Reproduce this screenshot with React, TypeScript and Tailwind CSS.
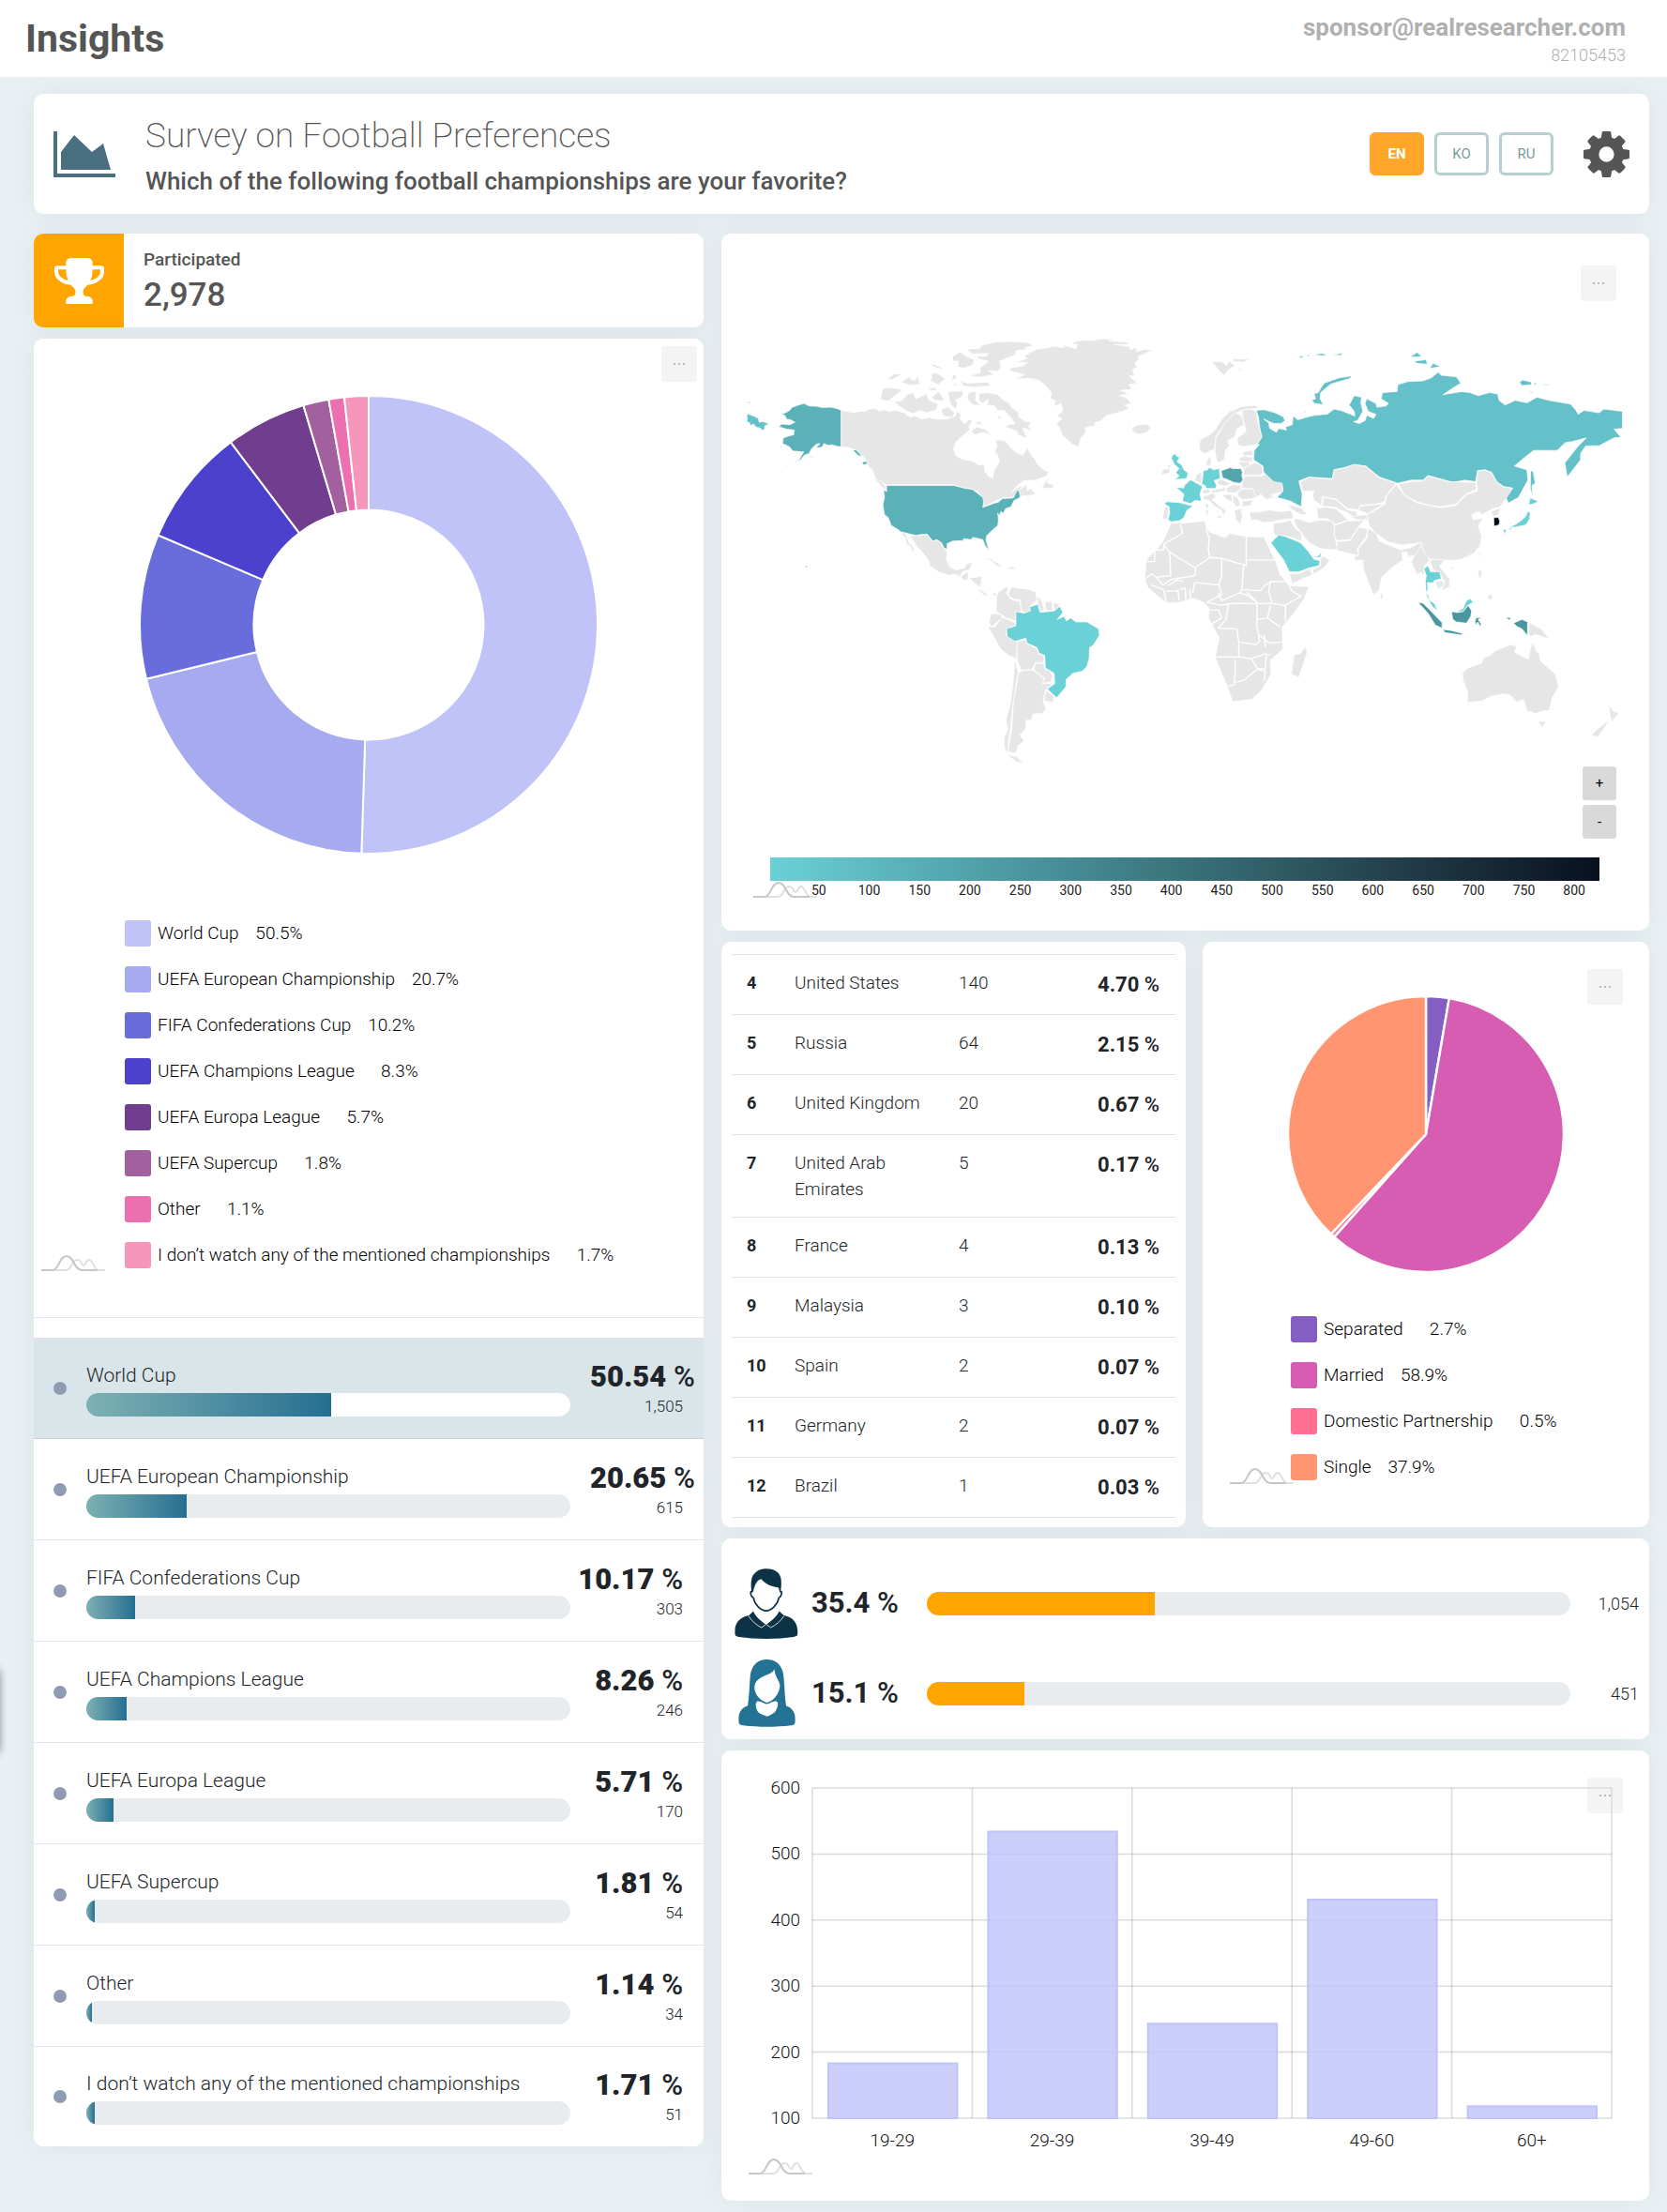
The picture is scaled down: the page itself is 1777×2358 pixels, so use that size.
import React from "react";

const CARD = "rounded-[10px] bg-white shadow-[0_0_30px_rgba(0,0,0,0.05)]";

type Slice = { label: string; pct: number; color: string };

const CHAMPIONSHIPS: Slice[] = [
  { label: "World Cup", pct: 50.5, color: "#bfc3f8" },
  { label: "UEFA European Championship", pct: 20.7, color: "#a6aaee" },
  { label: "FIFA Confederations Cup", pct: 10.2, color: "#696ddc" },
  { label: "UEFA Champions League", pct: 8.3, color: "#4c41cd" },
  { label: "UEFA Europa League", pct: 5.7, color: "#713d8e" },
  { label: "UEFA Supercup", pct: 1.8, color: "#a2609f" },
  { label: "Other", pct: 1.1, color: "#ec6faf" },
  { label: "I don’t watch any of the mentioned championships", pct: 1.7, color: "#f596ba" },
];

const RESULTS = [
  { pct: "50.54", count: "1,505" },
  { pct: "20.65", count: "615" },
  { pct: "10.17", count: "303" },
  { pct: "8.26", count: "246" },
  { pct: "5.71", count: "170" },
  { pct: "1.81", count: "54" },
  { pct: "1.14", count: "34" },
  { pct: "1.71", count: "51" },
];

const MARITAL: Slice[] = [
  { label: "Separated", pct: 2.7, color: "#845ec2" },
  { label: "Married", pct: 58.9, color: "#d65db1" },
  { label: "Domestic Partnership", pct: 0.5, color: "#ff6f91" },
  { label: "Single", pct: 37.9, color: "#ff9671" },
];

const COUNTRIES = [
  ["4", "United States", "140", "4.70"],
  ["5", "Russia", "64", "2.15"],
  ["6", "United Kingdom", "20", "0.67"],
  ["7", "United Arab Emirates", "5", "0.17"],
  ["8", "France", "4", "0.13"],
  ["9", "Malaysia", "3", "0.10"],
  ["10", "Spain", "2", "0.07"],
  ["11", "Germany", "2", "0.07"],
  ["12", "Brazil", "1", "0.03"],
];

const AGES = [
  { label: "19-29", value: 183 },
  { label: "29-39", value: 534 },
  { label: "39-49", value: 243 },
  { label: "49-60", value: 431 },
  { label: "60+", value: 118 },
];

const GREY = "#e6e6e6";
const TEAL = "#6ad1d6";
const RUS = "#64c1c9";
const USA = "#5bb1b8";
const IDN = "#4b979f";

type Land = [string, string];

const WEST: Land[] = [
  [USA, "188,333 202,330 215,322 222,313 240,306 262,300 276,308 300,309 320,313 345,312 366,316 380,322 380,438 366,437 350,432 338,434 325,428 318,440 300,442 312,428 300,430 285,445 277,460 262,465 250,480 218,494 245,480 260,455 225,452 214,438 192,428 195,410 212,404 228,400 230,385 205,382 180,374 190,366 215,368 232,360 218,352 205,350 200,338"],
  [USA, "277,472 290,468 286,472"],
  [USA, "418,450 426,447 440,460 445,470 434,466"],
  [USA, "446,488 462,484 466,492 450,496"],
  [USA, "183,438 190,436 187,441"],
  [USA, "204,498 214,494 208,499"],
  [RUS, "79,332 100,340 115,348 118,360 130,358 150,366 135,372 136,380 128,386 120,378 110,377 100,366 90,370 86,360 79,362"],
  [RUS, "79,294 92,296 85,300"],
  [USA, "266,818 271,818 271,823 266,823"],
  [GREY, "380,322 400,326 420,330 435,326 455,325 470,318 490,316 500,324 520,320 532,325 555,322 580,330 600,345 615,340 640,350 660,345 680,350 720,350 745,340 750,325 762,335 760,350 775,366 785,352 800,355 788,372 790,385 775,398 765,405 745,425 738,445 745,465 765,478 800,485 818,496 836,495 838,515 850,532 864,540 868,515 885,485 880,465 870,455 878,435 872,415 905,420 920,440 940,458 960,465 975,442 985,462 1000,480 1005,492 1025,510 1042,520 1035,532 1000,545 965,546 945,560 922,585 948,566 958,562 950,580 930,600 895,602 865,615 835,630 832,605 820,585 800,573 760,568 740,560 525,560 510,552 490,542 480,512 470,505 455,475 430,450 400,440 380,438"],
  [GREY, "950,575 972,560 975,580 985,572 1000,590 975,596 962,594 950,600"],
  [GREY, "970,605 985,598 980,606"],
  [GREY, "1020,570 1038,540 1040,556 1060,560 1055,572"],
  [GREY, "486,540 505,548 522,565 526,578 510,568"],
  [GREY, "505,285 513,252 540,250 575,256 555,272 530,292 515,290"],
  [GREY, "550,295 575,290 590,272 610,265 618,285 635,278 650,268 662,290 690,302 682,322 650,330 632,322 610,332 585,322 565,308"],
  [GREY, "527,222 548,206 575,205 560,215 540,224"],
  [GREY, "572,232 595,216 612,228 625,214 632,238 600,242"],
  [GREY, "665,228 672,202 690,205 712,222 690,240"],
  [GREY, "610,184 622,183 616,187"],
  [GREY, "735,150 760,136 780,150 805,160 800,178 770,187 752,182 755,165 738,165"],
  [GREY, "660,172 680,176 700,185 702,192 680,185"],
  [GREY, "732,222 740,205 748,215 742,224"],
  [GREY, "760,228 785,235 850,232 855,244 800,248 770,244"],
  [GREY, "735,242 745,234 750,243"],
  [GREY, "660,252 680,248 685,258 665,260"],
  [GREY, "668,280 690,262 708,285 705,292 680,290"],
  [GREY, "720,262 770,260 765,280 745,288 752,300 745,320 728,300"],
  [GREY, "700,320 720,310 742,330 735,345 705,340"],
  [GREY, "782,285 788,265 812,262 808,290 825,305 800,305"],
  [GREY, "820,268 845,265 880,272 900,290 918,300 922,312 945,328 948,345 970,358 990,360 978,372 990,392 975,382 960,378 968,400 975,412 945,400 940,388 905,375 915,368 935,365 922,345 900,322 880,322 870,308 845,305 850,285 832,300 820,290"],
  [GREY, "795,390 812,375 840,382 862,405 838,392 822,395 808,400"],
  [GREY, "878,344 886,340 892,346 884,350"],
  [GREY, "810,360 825,358 828,366 815,368"],
  [GREY, "780,126 820,126 830,114 870,105 930,102 975,106 995,115 965,122 975,128 940,130 935,145 910,155 885,165 890,185 880,198 850,195 868,208 830,215 785,212 825,202 822,188 850,165 818,158 812,148 842,150 850,140 800,142"],
  [GREY, "915,188 960,180 975,170 940,168 975,155 962,150 1000,128 1060,118 1092,122 1085,114 1130,125 1135,112 1115,108 1135,100 1180,98 1210,94 1255,95 1235,100 1290,104 1303,112 1250,112 1298,118 1305,128 1320,122 1325,135 1345,128 1382,130 1355,138 1330,150 1330,162 1318,170 1325,185 1310,192 1318,212 1300,212 1325,235 1300,240 1308,255 1270,258 1298,268 1268,275 1290,282 1306,300 1285,305 1300,315 1280,325 1228,338 1210,355 1190,362 1190,372 1160,376 1160,395 1145,410 1138,440 1118,430 1098,412 1085,400 1078,380 1068,362 1085,350 1070,340 1088,322 1082,300 1058,310 1065,292 1048,285 1052,268 1035,245 1010,225 985,220 935,220 965,208 925,198"],
  [GREY, "1308,382 1318,374 1335,372 1352,366 1368,378 1355,392 1332,398 1312,392"],
  [GREY, "1298,368 1308,370 1302,374"],
  [USA, "525,562 740,562 770,570 800,575 832,600 835,615 832,632 850,626 865,620 882,615 895,604 930,602 940,580 948,578 952,600 932,610 922,630 905,636 897,652 890,645 885,660 880,650 882,672 880,690 862,705 845,722 842,735 852,770 840,755 832,735 820,732 800,728 795,735 770,732 770,738 735,740 718,748 718,765 708,762 700,745 685,735 672,740 655,718 638,718 620,722 570,710 560,702 540,690 530,665 518,655 513,625 518,600 515,575 525,582"],
  [GREY, "600,722 620,722 655,720 672,740 685,737 700,745 710,766 718,770 716,800 730,825 745,832 775,826 780,812 800,808 788,832 768,836 760,852 740,845 725,850 690,838 662,818 660,802 635,770 620,755"],
  [GREY, "570,712 585,714 595,740 610,760 612,775 625,790 605,770 600,755 588,748 585,730"],
  [GREY, "762,852 785,838 786,852 782,866 768,862"],
  [GREY, "788,858 828,852 826,888 810,878 800,868"],
  [GREY, "812,888 832,900 852,912 872,904 880,916 862,910 840,914 828,906"],
  [GREY, "840,796 858,796 880,810 895,824 875,818 862,804"],
  [GREY, "912,828 924,820 940,828 925,830"],
  [GREY, "876,918 884,900 910,886 915,890 908,905 918,922 935,930 950,932 955,965 938,968 938,995 905,985 888,972 875,966"],
  [GREY, "914,905 925,886 945,890 980,894 1000,902 1005,928 985,945 985,962 968,970 955,960 952,928 935,925 918,918"],
  [GREY, "1005,912 1020,930 1028,955 1018,967 1008,942"],
  [GREY, "1030,935 1052,932 1056,962 1035,960"],
  [GREY, "1058,935 1078,942 1068,958 1058,955"],
  [GREY, "858,972 888,974 895,985 870,1005 862,1014 852,1000"],
  [GREY, "848,1012 868,1016 895,984 936,1000 936,1008 910,1020 906,1040 932,1058 942,1062 940,1115 915,1105 890,1085 870,1050"],
  [TEAL, "938,965 965,970 985,962 982,950 1008,942 1015,967 1060,963 1078,948 1088,968 1070,990 1092,980 1100,995 1112,985 1130,998 1165,998 1202,1020 1205,1040 1185,1072 1173,1080 1172,1115 1165,1140 1150,1155 1120,1162 1098,1182 1098,1205 1068,1240 1038,1212 1062,1195 1060,1162 1032,1145 1030,1105 1012,1098 1005,1080 972,1065 970,1050 935,1060 910,1045 908,1020 938,1010"],
  [GREY, "942,1062 968,1054 975,1068 1005,1084 1012,1100 1028,1108 1026,1128 998,1130 990,1150 955,1152 942,1120"],
  [GREY, "1000,1132 1026,1130 1032,1150 1045,1152 1056,1175 1046,1192 1022,1192 1030,1178 995,1150"],
  [GREY, "1034,1216 1062,1238 1056,1256 1028,1250"],
  [GREY, "945,1160 965,1152 992,1152 1028,1178 1022,1195 1055,1195 1032,1215 1025,1250 1035,1278 1020,1290 992,1292 988,1312 970,1312 970,1338 950,1360 965,1378 945,1392 938,1418 912,1412 925,1340 930,1250 942,1190"],
  [GREY, "935,1116 945,1160 938,1200 930,1250 920,1340 912,1400 918,1418 902,1405 900,1370 912,1340 906,1310 920,1260 928,1200"],
  [GREY, "908,1422 940,1428 962,1450 942,1446 930,1438"],
];

const EAST: Land[] = [
  [GREY, "255,165 290,168 298,180 308,165 325,180 305,192 292,210 278,196"],
  [GREY, "315,158 368,158 350,168 322,166"],
  [GREY, "328,184 348,196 342,198"],
  [GREY, "16,380 30,370 60,366 74,378 62,392 38,398 22,392"],
  [GREY, "218,430 222,415 250,400 265,385 285,350 310,325 345,310 385,306 395,315 350,320 320,335 292,370 268,405 264,445 235,460 220,450"],
  [GREY, "267,412 292,368 325,328 348,342 350,368 330,382 325,405 302,420 308,435 296,450 293,480 272,490 265,455"],
  [GREY, "345,322 372,318 388,325 390,350 398,380 405,408 388,432 345,438 332,430 332,410 358,390 350,355"],
  [GREY, "238,494 242,478 252,470 254,490 246,502"],
  [GREY, "345,455 378,450 378,465 352,468"],
  [GREY, "332,478 352,468 376,472 378,486 345,486"],
  [GREY, "332,488 362,486 370,496 350,506"],
  [GREY, "350,508 385,488 405,500 408,520 400,530 350,530"],
  [GREY, "345,552 355,532 405,532 415,525 440,545 465,556 466,582 430,592 442,602 415,606 402,590 385,600 378,572 345,572"],
  ["#54a5ac", "283,515 310,505 318,508 342,508 347,520 345,528 348,545 340,555 320,552 300,542 288,538"],
  [TEAL, "228,540 230,515 243,512 248,504 260,512 278,508 280,540 262,546 270,562 266,572 240,572 235,562 225,558"],
  [GREY, "204,546 210,528 224,518 226,540 222,556"],
  [TEAL, "148,568 172,570 175,560 192,544 228,565 220,590 225,612 205,610 192,620 168,612 172,590 160,578"],
  [TEAL, "240,622 244,622 243,634 239,632"],
  [TEAL, "113,620 122,614 160,617 200,628 182,640 172,665 160,674 135,678 125,672 130,650 128,630"],
  [GREY, "116,632 127,630 123,670 108,668"],
  [TEAL, "135,475 138,465 148,460 150,468 160,472 152,486 165,495 172,512 185,522 180,540 145,543 158,532 148,520 158,508 144,495"],
  [TEAL, "122,500 132,497 130,504"],
  [GREY, "105,528 108,512 130,508 130,522"],
  [GREY, "226,576 248,574 250,586 230,590"],
  [GREY, "252,578 272,574 296,568 296,580 260,586"],
  [GREY, "270,550 284,542 312,556 296,564 278,560"],
  [GREY, "300,570 318,560 344,562 342,574 326,586 300,584"],
  [GREY, "332,586 345,574 378,574 388,600 365,606 345,606 332,596"],
  [GREY, "345,612 378,608 370,626 348,630"],
  [GREY, "318,592 332,600 342,625 328,630 318,612"],
  [GREY, "286,592 314,590 318,615 300,608"],
  [GREY, "322,642 348,634 342,645 348,660 340,684 328,672"],
  [GREY, "228,598 262,586 268,600 256,606 275,625 298,642 290,658 284,640 262,628 248,610 232,608"],
  [GREY, "266,660 286,658 282,668"],
  [GREY, "238,640 246,640 244,656 238,656"],
  [GREY, "368,648 400,646 425,640 460,646 492,642 500,668 470,670 440,678 410,680 390,672 372,674"],
  [GREY, "480,622 522,634 540,655 518,654 496,640"],
  [RUS, "388,322 410,320 440,328 468,342 474,355 462,364 440,364 410,350 425,362 428,380 448,392 455,380 478,385 475,375 495,368 498,340 512,352 535,345 560,338 600,334 620,318 640,322 682,340 680,325 665,305 680,275 702,280 700,300 706,325 690,355 678,358 695,364 712,355 718,338 738,348 745,335 722,325 712,300 718,285 745,300 748,312 775,308 782,300 760,285 765,265 808,262 810,240 840,230 885,228 910,218 930,200 940,210 985,215 998,235 975,250 945,272 1000,262 1025,265 1050,275 1085,265 1108,270 1112,290 1130,305 1160,290 1195,298 1225,280 1260,290 1325,302 1340,320 1348,335 1365,322 1410,330 1425,318 1480,325 1480,380 1455,382 1475,408 1455,410 1410,435 1370,436 1355,460 1355,480 1330,515 1315,535 1308,490 1345,440 1372,410 1330,422 1310,425 1285,450 1215,450 1185,475 1158,500 1195,512 1198,545 1170,600 1140,618 1132,600 1152,570 1125,565 1105,550 1090,520 1070,512 1048,515 1042,550 1010,545 975,552 900,530 885,545 850,545 810,555 755,535 715,500 680,495 650,505 620,512 615,540 545,535 515,548 525,590 522,630 490,612 450,600 468,580 465,555 440,550 410,520 408,500 380,480 382,450 398,430 388,435 405,408 398,375 395,345"],
  [RUS, "553,290 565,285 560,268 572,266 590,235 635,218 672,212 668,220 610,238 580,265 578,285 588,304 562,300"],
  [RUS, "845,152 868,137 882,150"],
  [RUS, "858,165 895,160 898,175 868,172"],
  [RUS, "905,188 915,172 938,182"],
  [RUS, "1173,232 1182,225 1210,232 1208,240 1180,243"],
  [RUS, "1215,234 1225,236 1220,242"],
  [RUS, "1240,236 1268,241 1250,241"],
  [RUS, "1198,262 1215,262 1208,266"],
  [RUS, "512,150 530,148 524,155"],
  [RUS, "535,148 548,144 545,150"],
  [RUS, "560,144 585,140 600,148 575,147"],
  [RUS, "612,146 648,138 640,146"],
  [RUS, "528,326 536,325 534,330"],
  [RUS, "1206,515 1214,518 1220,555 1210,562 1213,600 1205,570"],
  [GREY, "518,550 545,537 615,542 620,512 650,507 680,495 715,502 755,538 805,554 775,595 770,615 740,622 700,625 690,640 660,635 625,605 585,598 582,625 560,610 556,592 562,580 528,580"],
  [GREY, "585,628 588,600 625,608 660,640 685,645 690,655 680,662 660,650 625,632"],
  [GREY, "568,635 595,632 625,636 662,672 625,686 600,668 572,668"],
  [GREY, "692,640 700,628 772,620 740,640 720,652"],
  [GREY, "668,662 718,654 720,674 690,672"],
  [GREY, "812,558 850,550 885,548 900,532 960,550 1042,552 1045,575 1015,588 1000,602 985,622 935,630 900,624 870,615 830,592"],
  [GREY, "806,558 828,592 868,618 935,633 985,626 1002,604 1018,590 1048,580 1045,552 1048,515 1070,513 1090,522 1105,550 1125,567 1152,572 1132,605 1115,630 1090,638 1062,655 1050,645 1030,655 1035,672 1065,665 1050,690 1060,725 1055,755 1038,778 1000,797 975,802 940,800 910,798 895,790 885,770 880,745 820,752 780,742 745,715 725,690 718,655 745,640 772,622 776,596"],
  [GREY, "966,826 978,820 972,830"],
  [GREY, "1050,795 1054,776 1057,784"],
  [GREY, "1088,645 1118,632 1110,655 1095,662"],
  ["#050b1c", "1096,665 1110,664 1114,676 1112,688 1097,692"],
  [TEAL, "1205,602 1230,613 1212,622 1200,622"],
  [TEAL, "1197,645 1205,648 1203,668 1192,688 1165,694 1140,698 1165,684 1180,672 1192,660"],
  [TEAL, "1124,702 1134,702 1128,720"],
  [TEAL, "1140,700 1152,696 1146,704"],
  [GREY, "440,682 475,678 490,672 505,700 520,712 526,742 500,730 475,724 445,722 438,708"],
  [GREY, "500,668 520,670 545,680 575,672 610,675 622,690 620,720 632,768 590,765 575,762 545,745 520,710 505,690"],
  [GREY, "622,690 660,675 700,675 715,668 695,690 668,735 628,738 620,720"],
  [GREY, "628,742 668,738 695,695 720,700 716,725 688,765 694,785 668,780 630,770"],
  [GREY, "722,698 745,715 755,740 818,768 850,760 875,745 885,750 862,790 850,785 842,795 838,775 822,775 825,800 795,822 762,855 755,895 738,912 722,870 708,830 705,800 685,802 678,790 694,785 692,765 718,730"],
  [GREY, "758,902 768,918 758,926"],
  [GREY, "862,785 880,752 888,775 905,800 890,818 888,848 878,840 868,848 850,805"],
  [GREY, "905,800 935,798 950,800 935,820 965,862 965,885 940,900 950,870 935,845 915,830"],
  [GREY, "922,870 945,866 948,884 930,892"],
  [TEAL, "888,828 900,818 908,838 935,838 940,860 918,866 915,874 898,872 900,895 895,905 892,870 895,850"],
  [TEAL, "891,902 902,915 905,928 920,940 928,962 912,948"],
  [TEAL, "985,965 1005,955 1015,930 1025,924 1035,935 1018,945 1005,965"],
  [IDN, "870,935 885,938 915,970 942,1000 942,1018 922,1008 900,970"],
  [IDN, "945,1022 968,1025 1003,1035 1000,1040 950,1032"],
  [IDN, "970,965 988,968 1005,965 1020,945 1030,962 1028,980 1015,1002 985,998 974,990"],
  [IDN, "1043,985 1062,983 1050,990 1060,1008 1054,1010 1048,998 1044,1008 1040,998"],
  [IDN, "1132,982 1148,985 1142,992"],
  [IDN, "1155,1002 1180,990 1197,998 1197,1042 1180,1020 1165,1012"],
  [GREY, "1201,1000 1238,1020 1262,1052 1240,1045 1222,1038 1201,1045"],
  [GREY, "1048,845 1052,828 1062,840 1056,860"],
  [GREY, "1078,918 1090,906 1092,922 1082,928"],
  [TEAL, "432,745 455,720 475,725 520,745 545,775 560,798 578,802 575,818 545,826 515,838 487,838 470,800 445,765"],
  [TEAL, "556,790 574,786 582,773 580,792"],
  [GREY, "582,785 608,800 590,825 560,845 556,832 578,820"],
  [GREY, "487,845 520,842 545,828 556,846 495,876"],
  [GREY, "135,682 180,682 235,675 240,700 250,712 295,728 310,715 360,726 410,726 428,765 448,810 458,845 485,882 545,885 530,925 500,970 465,1015 468,1085 430,1120 432,1165 405,1215 375,1245 318,1253 300,1200 265,1110 278,1050 245,985 248,955 235,938 200,922 160,935 120,938 65,888 55,862 60,800 108,745"],
  [GREY, "535,1078 540,1095 515,1175 493,1165 500,1105 520,1098"],
  [GREY, "1003,1160 1020,1145 1060,1130 1068,1110 1085,1105 1100,1090 1130,1078 1145,1070 1165,1076 1158,1095 1200,1117 1205,1085 1212,1062 1222,1090 1232,1100 1235,1122 1280,1165 1290,1205 1270,1240 1262,1280 1240,1283 1222,1290 1195,1282 1185,1245 1165,1255 1145,1232 1125,1228 1090,1235 1062,1250 1018,1256 1018,1220 1005,1185"],
  [GREY, "1228,1315 1252,1317 1240,1335"],
  [GREY, "1438,1263 1455,1285 1470,1288 1448,1316 1444,1300"],
  [GREY, "1440,1312 1425,1340 1405,1366 1386,1361 1410,1336"],
];

const AFRICA_BORDERS = [
  "60,805 85,805 85,768 112,768 112,750 168,715 162,685",
  "112,752 130,775 205,825 250,792 245,765 248,730 238,705",
  "130,775 133,850 90,855",
  "55,862 75,845 90,855 110,880 135,862 160,858 205,850 207,825",
  "358,725 358,800 442,800",
  "250,792 285,795 358,818 358,800",
  "285,795 285,850 276,880 205,872 198,905",
  "350,818 345,895 340,905 285,930 275,905",
  "276,880 285,910 260,925 240,935",
  "345,895 400,898 415,880 430,870 425,900 435,935",
  "430,870 480,868 495,900 522,915 475,945 430,938",
  "360,902 395,940 430,938",
  "475,945 475,995",
  "340,905 360,912 390,935 390,1010 398,1060 388,1070 335,1062",
  "305,940 340,938 390,940",
  "285,945 305,940 298,990 275,1018 330,1020 336,1062",
  "250,960 275,960 285,985 255,1005",
  "240,935 285,945",
  "430,945 422,985 390,990",
  "422,985 460,1015",
  "398,1040 425,1065 468,1062",
  "336,1062 336,1110 265,1110",
  "336,1110 372,1115 415,1100 430,1105",
  "415,1080 412,1040",
  "325,1118 325,1160 322,1200 300,1203",
  "325,1190 350,1185 390,1150 415,1155 412,1185",
  "372,1115 392,1148 415,1148 418,1105",
  "120,938 112,895 75,880",
  "120,900 155,898 158,930",
  "178,925 176,890 160,895",
  "192,925 190,892",
  "125,882 150,865 170,868",
];

function WorldMap() {
  return (
    <svg viewBox="789 350 948 470" className="block w-full" role="img" aria-label="World map of participants">
      <g transform="translate(770 330) scale(0.333333)" stroke="#fff" strokeWidth="2" strokeLinejoin="round">
        {WEST.map(([fill, points], i) => (
          <polygon key={i} points={points} fill={fill} />
        ))}
      </g>
      <g transform="translate(1200 330) scale(0.357143 0.333333)" stroke="#fff" strokeWidth="2" strokeLinejoin="round">
        {EAST.map(([fill, points], i) => (
          <polygon key={i} points={points} fill={fill} />
        ))}
        {AFRICA_BORDERS.map((points, i) => (
          <polyline key={i} points={points} fill="none" strokeWidth="4" />
        ))}
      </g>
    </svg>
  );
}

function arc(cx: number, cy: number, r: number, inner: number, from: number, to: number) {
  const at = (radius: number, f: number) => {
    const a = f * Math.PI * 2 - Math.PI / 2;
    return `${cx + radius * Math.cos(a)} ${cy + radius * Math.sin(a)}`;
  };
  const large = to - from > 0.5 ? 1 : 0;
  const outer = `M${at(r, from)} A${r} ${r} 0 ${large} 1 ${at(r, to)}`;
  return inner
    ? `${outer} L${at(inner, to)} A${inner} ${inner} 0 ${large} 0 ${at(inner, from)} Z`
    : `${outer} L${cx} ${cy} Z`;
}

function Pie({ data, r, inner, stroke, label }: { data: Slice[]; r: number; inner: number; stroke: number; label: string }) {
  const c = r + 1;
  const total = data.reduce((sum, d) => sum + d.pct, 0);
  let start = 0;
  return (
    <svg viewBox={`0 0 ${c * 2} ${c * 2}`} className="block w-full" role="img" aria-label={label}>
      {data.map((d) => {
        const from = start;
        start += d.pct / total;
        return (
          <path key={d.label} d={arc(c, c, r, inner, from, start)} fill={d.color} stroke="#fff" strokeWidth={stroke} />
        );
      })}
    </svg>
  );
}

function Legend({ data }: { data: Slice[] }) {
  return (
    <ul>
      {data.map((d) => (
        <li key={d.label} className="flex h-[49px] items-center text-[19px] leading-7 font-light whitespace-nowrap text-black">
          <span className="h-7 w-7 shrink-0 rounded-[3px]" style={{ backgroundColor: d.color }} />
          <span className="ml-[7px]">{d.label}</span>
          <span className="w-[68px] text-right">{d.pct.toFixed(1)}%</span>
        </li>
      ))}
    </ul>
  );
}

function Waves() {
  return (
    <svg viewBox="0 0 68 18" className="h-[18px] w-[68px]" fill="none" strokeWidth="2" aria-hidden="true">
      <path d="M12 16H26C33 16 32 5 38 5S42 11 45 11S47 5 51 5S56 16 61 16H68" stroke="#e0e0e0" />
      <path d="M0 16H12C19 16 19 1 27 1S35 16 43 16H60" stroke="#c6c6c6" />
    </svg>
  );
}

function MenuButton() {
  return (
    <button
      type="button"
      aria-label="Chart menu"
      className="flex h-[38px] w-[38px] items-center justify-center gap-[3px] rounded-[3px] bg-[#d9d9d9]/30"
    >
      <span className="h-[2px] w-[2px] bg-[#bbb]" />
      <span className="h-[2px] w-[2px] bg-[#bbb]" />
      <span className="h-[2px] w-[2px] bg-[#bbb]" />
    </button>
  );
}

function AgeChart() {
  const x0 = 97;
  const y0 = 40;
  const w = 852;
  const h = 352;
  const col = w / 5;
  const y = (v: number) => y0 + h - ((v - 100) / 500) * h;
  return (
    <svg viewBox="0 0 989 430" className="block w-full" role="img" aria-label="Participants by age">
      <g fill="none" stroke="#000" strokeOpacity="0.14" strokeWidth="1.5">
        {[100, 200, 300, 400, 500, 600].map((v) => (
          <path key={v} d={`M${x0} ${y(v)}H${x0 + w}`} />
        ))}
        {[0, 1, 2, 3, 4, 5].map((i) => (
          <path key={i} d={`M${x0 + i * col} ${y0}V${y0 + h}`} />
        ))}
      </g>
      {AGES.map((a, i) => (
        <rect
          key={a.label}
          x={x0 + i * col + 17}
          y={y(a.value)}
          width={col - 33}
          height={y(100) - y(a.value)}
          fill="#bfc3f8"
          fillOpacity="0.8"
          stroke="#bfc3f8"
          strokeWidth="2"
        />
      ))}
      <g fontSize="19" fontWeight="300" fill="#111">
        {[100, 200, 300, 400, 500, 600].map((v) => (
          <text key={v} x={x0 - 13} y={y(v) + 6} textAnchor="end">
            {v}
          </text>
        ))}
        {AGES.map((a, i) => (
          <text key={a.label} x={x0 + i * col + col / 2} y={y0 + h + 30} textAnchor="middle">
            {a.label}
          </text>
        ))}
      </g>
    </svg>
  );
}

function ManIcon() {
  return (
    <svg viewBox="26 50 204 226" className="h-[75px] w-[68px]" aria-hidden="true">
      <path d="M84 125C72 118 78 142 86 144C90 166 110 186 127 186S164 166 168 144C176 142 182 118 171 125" fill="#fff" stroke="#0e3245" strokeWidth="5" />
      <path d="M81 130C76 96 79 74 91 65C101 54 114 51 128 51C158 51 172 66 175 84C177 100 175 116 172 130L167 112C150 109 127 103 111 84C100 86 91 100 86 122Z" fill="#0e3245" />
      <path d="M86 187C91 201 108 218 127 230C146 218 163 201 169 187L184 201C208 205 226 220 228 248V262C227 268 222 268 215 270C165 278 92 278 40 270C31 268 28 267 27 260V246C28 222 47 205 72 201Z" fill="#0e3245" />
      <path d="M70 202C82 220 96 232 112 240L127 229L142 240C158 232 173 220 185 202" fill="none" stroke="#fff" strokeWidth="2.5" />
    </svg>
  );
}

function WomanIcon() {
  return (
    <svg viewBox="35 344 184 218" className="h-[72px] w-[61px]" aria-hidden="true">
      <path d="M127 344C92 344 75 370 73 400C70 435 70 465 65 494C45 499 36 515 36 535V546C37 553 41 556 50 557C100 563 155 563 205 557C214 556 218 553 218 546V532C218 514 207 499 189 494C184 465 185 435 181 400C179 368 161 344 127 344Z" fill="#247294" />
      <path d="M151 374C146 397 92 393 87 431C85 456 107 478 127 483C146 479 167 456 169 430C171 416 152 400 151 374Z" fill="#fff" />
      <path d="M97 479C88 483 90 501 99 514C108 522 119 523 127 528C135 524 147 521 155 511C162 499 166 484 158 479C147 476 138 486 127 488C116 487 106 476 97 479Z" fill="#fff" />
    </svg>
  );
}

function GenderRow({ icon, name, pct, count }: { icon: React.ReactNode; name: string; pct: number; count: string }) {
  return (
    <div className="flex h-24 items-center pr-[11px] pl-[13px]">
      <div className="flex w-[70px] justify-center">{icon}</div>
      <div className="ml-[13px] w-[123px] text-[31px] font-bold whitespace-nowrap">
        {pct} <span className="font-medium">%</span>
      </div>
      <div
        role="progressbar"
        aria-label={name}
        aria-valuenow={pct}
        className="h-[25px] flex-1 overflow-hidden rounded-full bg-[#e8ecee]"
      >
        <div className="h-full bg-[#ffa500]" style={{ width: `${pct}%` }} />
      </div>
      <div className="w-[73px] text-right text-[18px] font-light">{count}</div>
    </div>
  );
}

export default function App() {
  return (
    <div className="relative min-h-screen overflow-hidden bg-[#e8f0f3] font-['Roboto','Liberation_Sans',sans-serif] text-[#212529]">
      <header className="flex h-[82px] items-center justify-between bg-white pr-11 pl-[27px]">
        <h1 className="text-[41px] leading-[48px] font-bold text-[#555]">Insights</h1>
        <div className="pt-1 text-right text-[#b0b0b0]">
          <div className="text-[26px] leading-[32px] font-bold">sponsor@realresearcher.com</div>
          <div className="text-[18px] leading-[28px] font-light">82105453</div>
        </div>
      </header>

      <main className="pt-[18px] pr-[19px] pb-3 pl-9">
        <section className={`${CARD} flex h-32 items-center px-[21px]`}>
          <svg viewBox="0 0 66 49" className="h-[49px] w-[66px] shrink-0" fill="#4a6f80" aria-hidden="true">
            <path d="M0 0H4V45H66V49H0Z" />
            <path d="M8 41V22L22 4L41 22L53 13L61 41Z" />
          </svg>
          <div className="ml-8 flex-1 pt-[6px] text-[#555]">
            <h2 className="text-[37px] leading-[52px] font-extralight">Survey on Football Preferences</h2>
            <p className="text-[26px] leading-[44px] font-medium">
              Which of the following football championships are your favorite?
            </p>
          </div>
          <div className="flex gap-[11px] text-[15px]">
            <button type="button" className="h-[46px] w-[58px] rounded-md bg-[#ffa62b] font-bold text-white">EN</button>
            <button type="button" className="h-[46px] w-[58px] rounded-md border-[3px] border-[#b8cfd0] text-[#7a9a9d]">KO</button>
            <button type="button" className="h-[46px] w-[58px] rounded-md border-[3px] border-[#b8cfd0] text-[#7a9a9d]">RU</button>
          </div>
          <button type="button" aria-label="Settings" className="ml-8">
            <svg viewBox="128 128 1536 1536" className="h-[49px] w-[49px]" fill="#555" aria-hidden="true">
              <path d="M1152 896q0-106-75-181t-181-75-181 75-75 181 75 181 181 75 181-75 75-181zm512-109v222q0 12-8 23t-20 13l-185 28q-19 54-39 91 35 50 107 138 10 12 10 25t-9 23q-27 37-99 108t-94 71q-12 0-26-9l-138-108q-44 23-91 38-16 136-29 186-7 28-36 28h-222q-14 0-24.5-8.5t-11.5-21.5l-28-184q-49-16-90-37l-141 107q-10 9-25 9-14 0-25-11-126-114-165-168-7-10-7-23 0-12 8-23 15-21 51-66.5t54-70.5q-27-50-41-99l-183-27q-13-2-21-12.5t-8-23.5v-222q0-12 8-23t19-13l186-28q14-46 39-92-40-57-107-138-10-12-10-24 0-10 9-23 26-36 98.5-107.5t94.5-71.5q13 0 26 10l138 107q44-23 91-38 16-136 29-186 7-28 36-28h222q14 0 24.5 8.5t11.5 21.5l28 184q49 16 90 37l142-107q9-9 24-9 13 0 25 10 129 119 165 170 7 8 7 22 0 12-8 23-15 21-51 66.5t-54 70.5q26 50 41 98l183 28q13 2 21 12.5t8 23.5z" />
            </svg>
          </button>
        </section>

        <div className="mt-[21px] grid grid-cols-[714fr_989fr] items-start gap-x-[19px]">
          <div className="flex min-w-0 flex-col gap-3">
            <section className={`${CARD} flex h-[100px] overflow-hidden`}>
              <div className="flex w-24 items-center justify-center bg-[#ffa500]">
                <svg viewBox="64 128 1664 1536" className="h-[49px] w-[53px]" fill="#fff" aria-hidden="true">
                  <path d="M522 883q-74-162-74-371h-256v96q0 78 94.5 162t235.5 113zm1078-275v-96h-256q0 209-74 371 141-29 235.5-113t94.5-162zm128-128v128q0 71-41.5 143t-112 130-173 97.5-215.5 44.5q-42 54-95 95-38 34-52.5 72.5t-14.5 89.5q0 54 30.5 91t97.5 37q75 0 133.5 45.5t58.5 114.5v64q0 14-9 23t-23 9h-832q-14 0-23-9t-9-23v-64q0-69 58.5-114.5t133.5-45.5q67 0 97.5-37t30.5-91q0-51-14.5-89.5t-52.5-72.5q-53-41-95-95-113-5-215.5-44.5t-173-97.5-112-130-41.5-143v-128q0-40 28-68t68-28h288v-96q0-66 47-113t113-47h576q66 0 113 47t47 113v96h288q40 0 68 28t28 68z" />
                </svg>
              </div>
              <div className="flex flex-col justify-center pt-[2px] pl-[21px] text-[#555]">
                <div className="text-[19px] leading-[30px] font-medium">Participated</div>
                <div className="text-[35px] leading-[46px] font-medium">2,978</div>
              </div>
            </section>

            <section className={`${CARD} relative overflow-hidden`}>
              <div className="absolute top-2 right-[7px]">
                <MenuButton />
              </div>
              <div className="mx-auto w-[490px] pt-[60px]">
                <Pie data={CHAMPIONSHIPS} r={243} inner={122} stroke={2} label="Favorite championships" />
              </div>
              <div className="mt-[59px] pl-[97px]">
                <Legend data={CHAMPIONSHIPS} />
              </div>
              <div className="absolute top-[977px] left-2">
                <Waves />
              </div>
              <ul className="mt-[42px] border-t border-[#e4e8ea] pt-[21px]">
                {RESULTS.map((r, i) => (
                  <li
                    key={r.pct}
                    className={`flex items-center pl-[21px] ${i === 0 ? "h-[108px] border-b border-[#c6d4da] bg-[#dae5e9]" : i === RESULTS.length - 1 ? "h-[106px]" : "h-[108px] border-b border-[#e4e8ea]"}`}
                  >
                    <span className="h-[14px] w-[14px] shrink-0 rounded-full bg-[#8e9bb0]" />
                    <div className="ml-[21px] min-w-0 flex-1">
                      <div className="mb-[3px] text-[21px] leading-[32px] font-light">{CHAMPIONSHIPS[i].label}</div>
                      <div
                        role="progressbar"
                        aria-label={CHAMPIONSHIPS[i].label}
                        aria-valuenow={Number(r.pct)}
                        className={`h-[25px] overflow-hidden rounded-full ${i === 0 ? "bg-white" : "bg-[#e8ecee]"}`}
                      >
                        <div
                          className="h-full bg-linear-to-r from-[#7db1b3] to-[#236f91]"
                          style={{ width: `${r.pct}%` }}
                        />
                      </div>
                    </div>
                    <div className="mr-[22px] ml-[21px] flex w-[99px] flex-col text-right">
                      <div className={`text-[31px] leading-[38px] font-black whitespace-nowrap ${i < 2 ? "self-start" : "self-end"}`}>
                        {r.pct} <span className="font-medium">%</span>
                      </div>
                      <div className="text-[17px] leading-[24px] font-light">{r.count}</div>
                    </div>
                  </li>
                ))}
              </ul>
            </section>
          </div>

          <div className="flex min-w-0 flex-col gap-3">
            <section className={`${CARD} relative h-[743px] px-5 pt-[101px]`}>
              <div className="absolute top-[34px] right-[35px]">
                <MenuButton />
              </div>
              <WorldMap />
              <div className="absolute right-[35px] bottom-[98px] flex flex-col gap-[5px]">
                <button type="button" aria-label="Zoom in" className="h-9 w-9 rounded-[3px] bg-[#d9d9d9] text-[15px] text-black">+</button>
                <button type="button" aria-label="Zoom out" className="h-9 w-9 rounded-[3px] bg-[#d9d9d9] text-[15px] text-black">-</button>
              </div>
              <div className="absolute right-[53px] bottom-[33px] left-[52px]">
                <div className="h-[25px] bg-[linear-gradient(to_right,#6ad1d6_0%,#4b979f_30%,#356870_55%,#233f4c_75%,#08101e_100%)]" />
                <div className="flex h-5 pl-[25px] text-[14px] leading-5 text-[#222]">
                  {Array.from({ length: 16 }, (_, i) => (
                    <span key={i} className="flex-1 text-center">{(i + 1) * 50}</span>
                  ))}
                </div>
              </div>
              <div className="absolute bottom-[34px] left-[34px]">
                <Waves />
              </div>
            </section>

            <div className="grid grid-cols-[495fr_476fr] gap-[18px]">
              <section className={`${CARD} px-[11px] pt-[13px] pb-[10px]`}>
                <table className="w-full border-b border-[#dee2e6] text-[19px] leading-7 font-light">
                  <tbody>
                    {COUNTRIES.map(([rank, name, count, pct]) => (
                      <tr key={rank} className="border-t border-[#dee2e6] align-top">
                        <th scope="row" className="w-[67px] pt-4 pb-[15px] pl-4 text-left text-[18px] font-bold">{rank}</th>
                        <td className="w-[175px] pt-4 pr-6 pb-[15px]">{name}</td>
                        <td className="pt-4 pb-[15px]">{count}</td>
                        <td className="pt-4 pr-[17px] pb-[15px] text-right text-[22px] leading-8 font-bold">
                          {pct} <span className="font-medium">%</span>
                        </td>
                      </tr>
                    ))}
                  </tbody>
                </table>
              </section>

              <section className={`${CARD} relative`}>
                <div className="absolute top-[29px] right-7">
                  <MenuButton />
                </div>
                <div className="mx-auto w-[296px] pt-[57px]">
                  <Pie data={MARITAL} r={146} inner={0} stroke={2.5} label="Marital status" />
                </div>
                <div className="absolute top-[561px] left-[29px]">
                  <Waves />
                </div>
                <div className="relative mt-[35px] pl-[94px]">
                  <Legend data={MARITAL} />
                </div>
              </section>
            </div>

            <section className={`${CARD} h-[214px] pt-[21px]`}>
              <GenderRow icon={<ManIcon />} name="Male" pct={35.4} count="1,054" />
              <GenderRow icon={<WomanIcon />} name="Female" pct={15.1} count="451" />
            </section>

            <section className={`${CARD} relative pb-[50px]`}>
              <AgeChart />
              <div className="absolute top-[29px] right-7">
                <MenuButton />
              </div>
              <div className="absolute bottom-[27px] left-[29px]">
                <Waves />
              </div>
            </section>
          </div>
        </div>
      </main>
      <div className="absolute top-[1778px] left-[-20px] h-[92px] w-5 rounded-lg shadow-[0_0_8px_rgba(0,0,0,0.4)]" />
    </div>
  );
}
